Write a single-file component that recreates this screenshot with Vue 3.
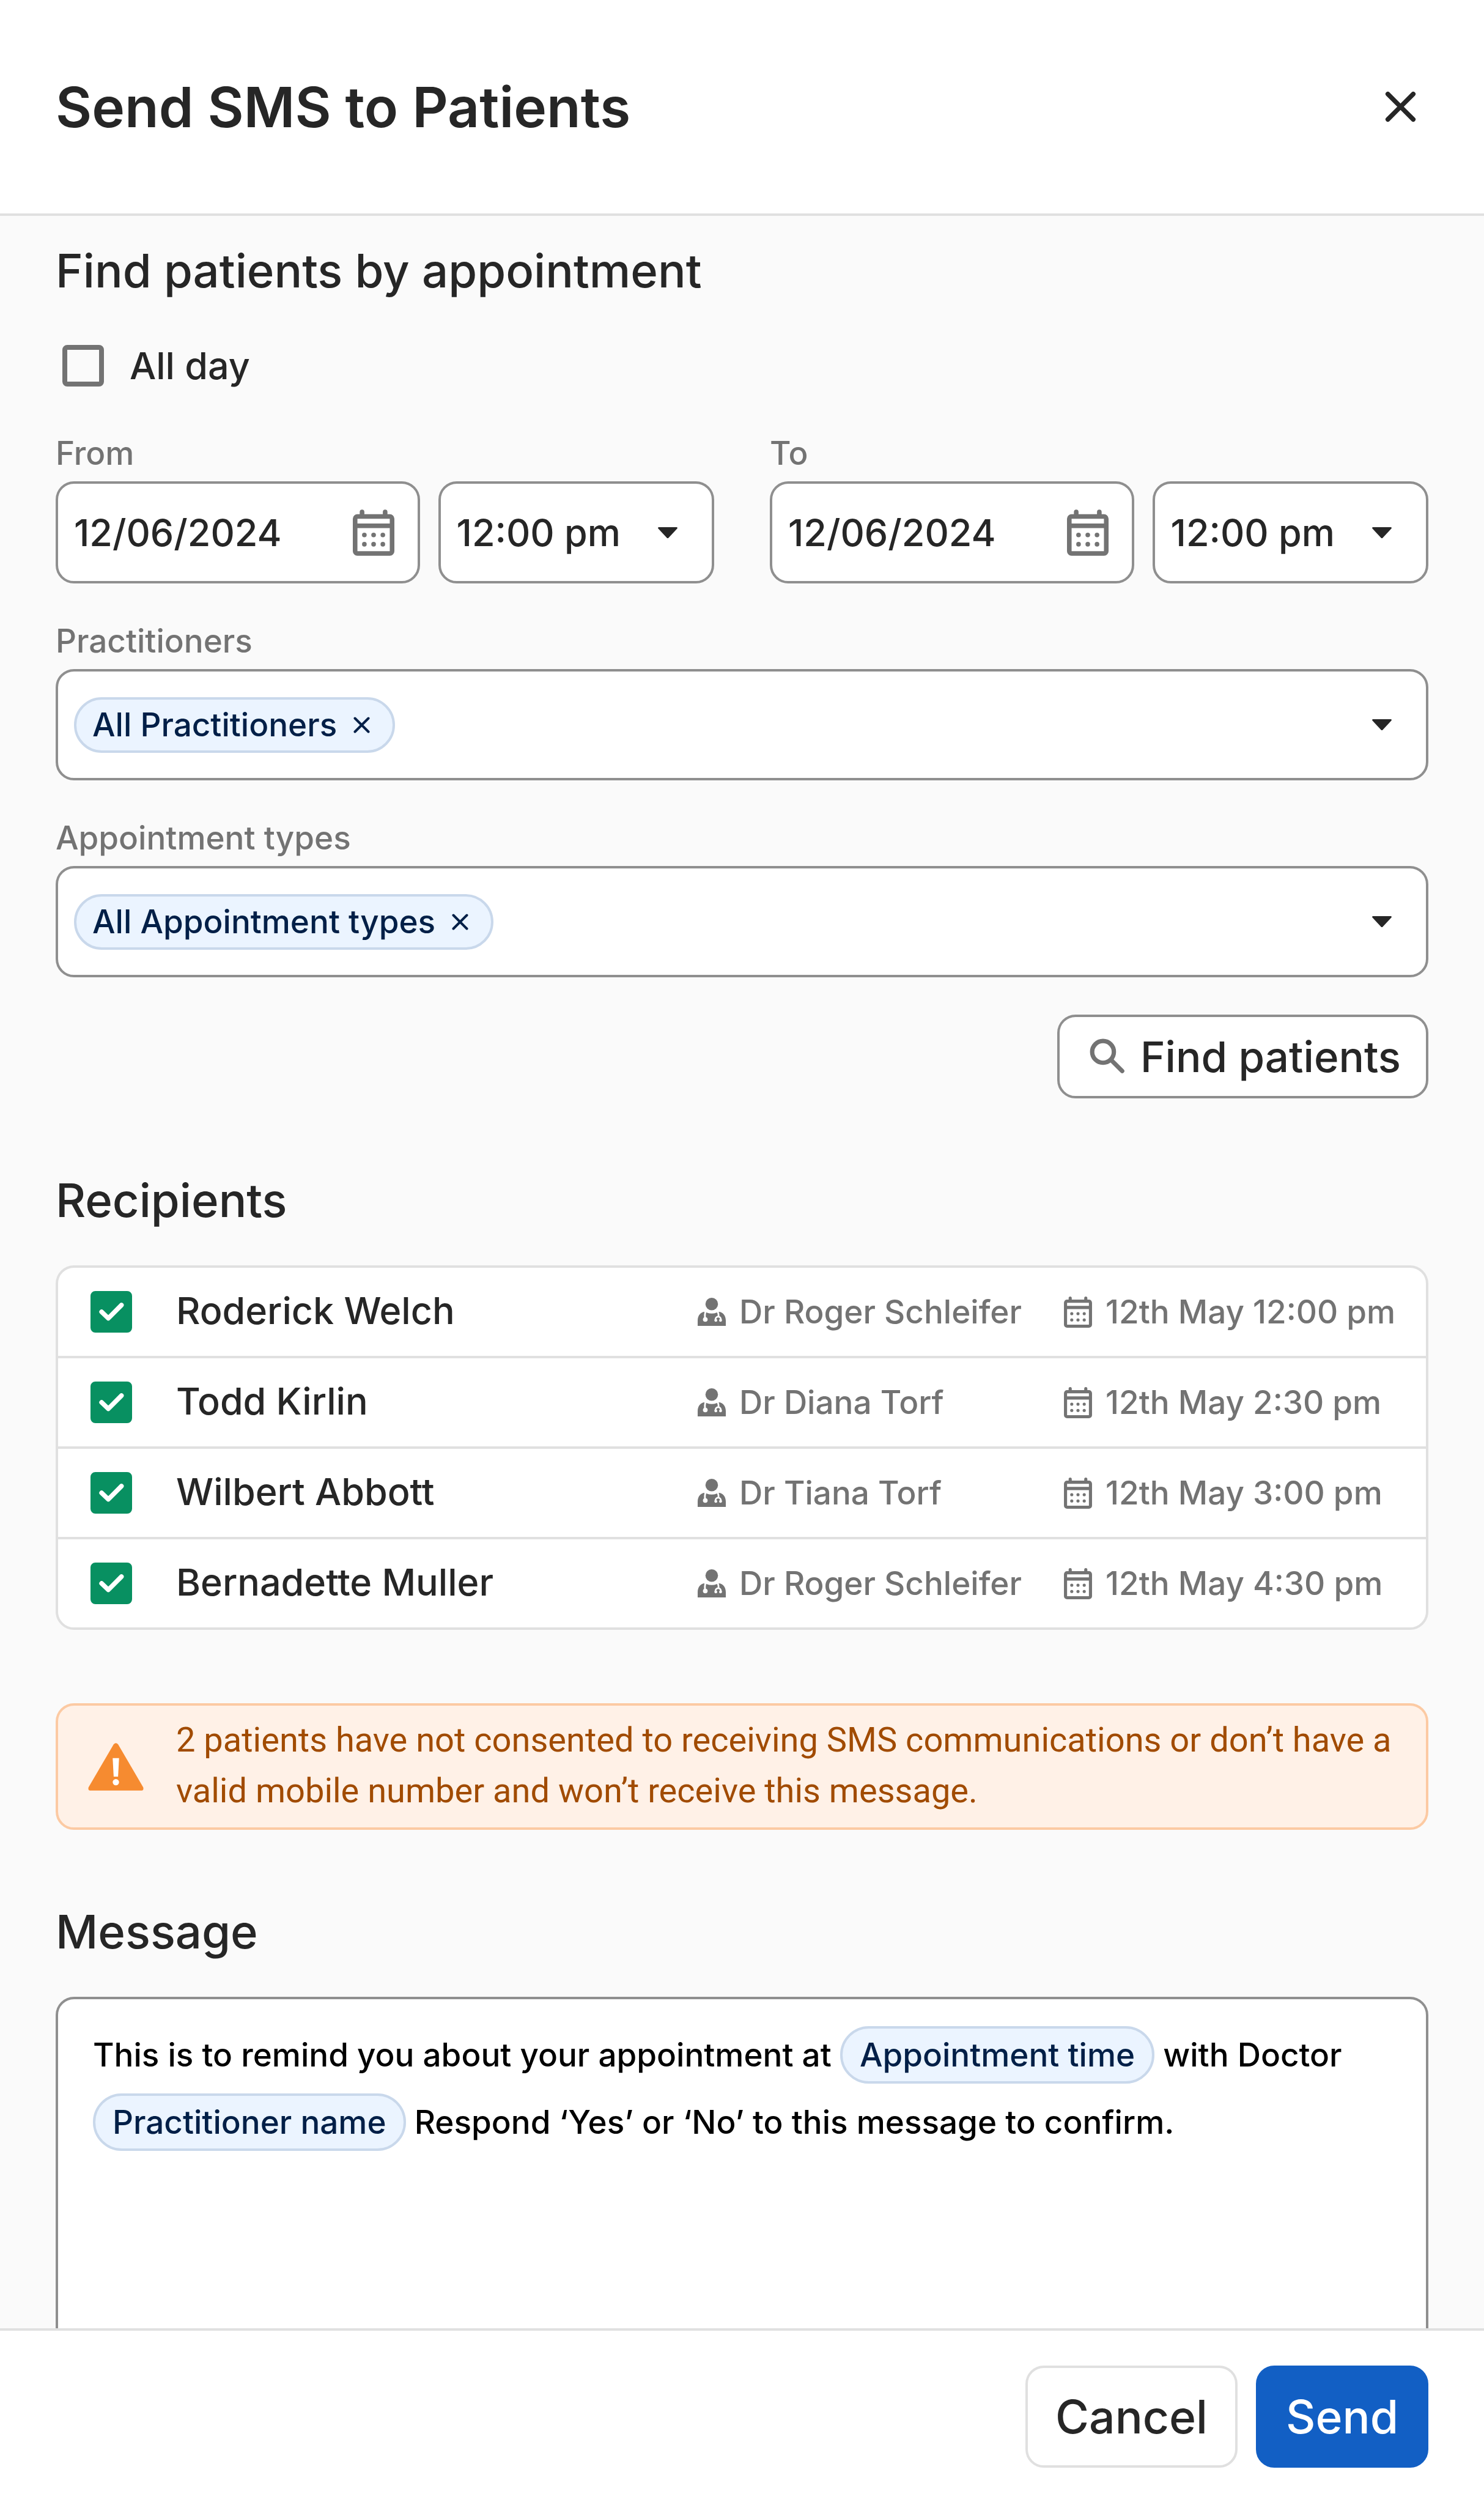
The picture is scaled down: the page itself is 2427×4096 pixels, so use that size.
<script setup>
import { reactive, ref } from 'vue'

const allDay = ref(false)

const ranges = reactive([
  { id: 'from', label: 'From', date: '12/06/2024', time: '12:00 pm' },
  { id: 'to', label: 'To', date: '12/06/2024', time: '12:00 pm' },
])

const filters = [
  { id: 'practitioners', label: 'Practitioners', tag: 'All Practitioners' },
  { id: 'types', label: 'Appointment types', tag: 'All Appointment types' },
]

const recipients = reactive([
  { name: 'Roderick Welch', doctor: 'Dr Roger Schleifer', time: '12th May 12:00 pm', selected: true },
  { name: 'Todd Kirlin', doctor: 'Dr Diana Torf', time: '12th May 2:30 pm', selected: true },
  { name: 'Wilbert Abbott', doctor: 'Dr Tiana Torf', time: '12th May 3:00 pm', selected: true },
  { name: 'Bernadette Muller', doctor: 'Dr Roger Schleifer', time: '12th May 4:30 pm', selected: true },
])
</script>

<template>
  <div class="dialog" role="dialog" aria-labelledby="dialog-title">
    <svg class="sprite" aria-hidden="true">
      <symbol id="icon-calendar" viewBox="0 0 18 20">
        <path
          fill-rule="evenodd"
          d="M3 2V1a1 1 0 0 1 2 0v1h8V1a1 1 0 0 1 2 0v1h1a2 2 0 0 1 2 2v14a2 2 0 0 1-2 2H2a2 2 0 0 1-2-2V4a2 2 0 0 1 2-2ZM2 4v2h14V4ZM2 8v10h14V8Z"
        />
        <g>
          <circle cx="5" cy="11" r="1" /><circle cx="9" cy="11" r="1" /><circle cx="13" cy="11" r="1" />
          <circle cx="5" cy="15" r="1" /><circle cx="9" cy="15" r="1" /><circle cx="13" cy="15" r="1" />
        </g>
      </symbol>
      <symbol id="icon-caret" viewBox="0 0 34 19">
        <path d="M1.5 0h31a1.3 1.3 0 0 1 1 2.200L18.400 18.400a2 2 0 0 1-2.800 0L.5 2.200A1.300 1.300 0 0 1 1.500 0Z" />
      </symbol>
      <symbol id="icon-doctor" viewBox="0 0 48 48">
        <circle cx="24" cy="10.700" r="10.700" />
        <path d="M0 48V39C0 30.500 5 24.300 12 24L15.500 25.200Q24 28.500 32.500 25.200L36 24C43 24.300 48 30.500 48 39V48Z" />
        <g fill="none" stroke="#fff" stroke-width="3">
          <path d="M13.300 23C12.400 27 12 30 12.500 34" />
          <path d="M34 23C35.500 26 36 29 35.700 33" />
          <path d="M30.300 39V37.500C30.300 30.500 39.700 30.500 39.700 37.500V39" />
        </g>
        <g fill="#fff">
          <circle cx="13" cy="37" r="4" />
          <circle cx="31" cy="38.600" r="2.400" /><circle cx="39" cy="38.600" r="2.400" />
        </g>
      </symbol>
      <symbol id="icon-close" viewBox="0 0 54 54">
        <path d="M5 5 49 49M49 5 5 49" fill="none" stroke="currentColor" stroke-width="8" stroke-linecap="round" />
      </symbol>
    </svg>

    <header class="header">
      <h1 id="dialog-title">Send SMS to Patients</h1>
      <button class="close" type="button" aria-label="Close">
        <svg><use href="#icon-close" /></svg>
      </button>
    </header>

    <main class="content">
      <form class="section" @submit.prevent>
        <h2>Find patients by appointment</h2>

        <label class="all-day">
          <input v-model="allDay" class="check" type="checkbox" />
          All day
        </label>

        <div class="ranges">
          <div v-for="range in ranges" :key="range.id" class="field">
            <label :for="range.id + '-date'">{{ range.label }}</label>
            <div class="range">
              <div class="box">
                <input :id="range.id + '-date'" v-model="range.date" type="text" />
                <svg class="calendar"><use href="#icon-calendar" /></svg>
              </div>
              <div class="box">
                <select v-model="range.time" :aria-label="range.label + ' time'">
                  <option>12:00 pm</option>
                  <option>1:00 pm</option>
                </select>
                <svg class="caret"><use href="#icon-caret" /></svg>
              </div>
            </div>
          </div>
        </div>

        <div v-for="filter in filters" :key="filter.id" class="field filter">
          <label :for="filter.id">{{ filter.label }}</label>
          <div class="box tall">
            <span class="tag">
              {{ filter.tag }}
              <button type="button" :aria-label="'Remove ' + filter.tag">
                <svg><use href="#icon-close" /></svg>
              </button>
            </span>
            <input :id="filter.id" type="text" />
            <svg class="caret"><use href="#icon-caret" /></svg>
          </div>
        </div>

        <button class="find" type="submit">
          <svg viewBox="0 0 80 80">
            <g fill="none" stroke="currentColor" stroke-width="7.500" stroke-linecap="round">
              <circle cx="31.500" cy="31.500" r="18.700" />
              <path d="M45.500 45.500 64.500 64.500" />
            </g>
          </svg>
          Find patients
        </button>
      </form>

      <section class="section">
        <h2>Recipients</h2>
        <div class="list">
          <table>
            <colgroup>
              <col class="col-check" />
              <col />
              <col class="col-doctor" />
              <col class="col-time" />
            </colgroup>
            <tbody>
              <tr v-for="(person, i) in recipients" :key="person.name">
                <td>
                  <span class="tick">
                    <input :id="'recipient-' + i" v-model="person.selected" class="check" type="checkbox" />
                    <svg viewBox="0 0 18 18">
                      <path d="M4.800 9 7.700 11.800 13.400 6.100" fill="none" stroke="#fff" stroke-width="2" stroke-linecap="round" stroke-linejoin="round" />
                    </svg>
                  </span>
                </td>
                <td><label :for="'recipient-' + i">{{ person.name }}</label></td>
                <td>
                  <span class="meta"><svg class="doctor"><use href="#icon-doctor" /></svg>{{ person.doctor }}</span>
                </td>
                <td>
                  <span class="meta"><svg class="date"><use href="#icon-calendar" /></svg>{{ person.time }}</span>
                </td>
              </tr>
            </tbody>
          </table>
        </div>
      </section>

      <div class="warning" role="alert">
        <svg viewBox="0 0 96 82">
          <path d="M44 2.500Q48-2 52 2.500L95 76Q97 82 91 82H5Q-1 82 1 76Z" fill="#f68b30" />
          <path d="M42.500 26h11l-1.700 32h-7.600Z" fill="#fff" />
          <circle cx="48" cy="67.500" r="5.500" fill="#fff" />
        </svg>
        <p>2 patients have not consented to receiving SMS communications or don’t have a valid mobile number and won’t receive this message.</p>
      </div>

      <section class="section">
        <h2 id="message-title">Message</h2>
        <div class="message" role="textbox" aria-multiline="true" aria-labelledby="message-title" contenteditable="true" spellcheck="false">This is to remind you about your appointment at <span class="token" contenteditable="false">Appointment time</span> with Doctor <span class="token" contenteditable="false">Practitioner name</span> Respond ‘Yes’ or ‘No’ to this message to confirm.</div>
      </section>
    </main>

    <footer class="footer">
      <button class="action" type="button">Cancel</button>
      <button class="action primary" type="button">Send</button>
    </footer>
  </div>
</template>

<style>
body {
  margin: 0;
}
</style>

<style scoped>
* {
  box-sizing: border-box;
}

.dialog {
  display: flex;
  flex-direction: column;
  height: 100vh;
  background: #fff;
  color: #262626;
  font-family: Inter, "Liberation Sans", sans-serif;
  font-weight: 500;
  font-size: 53px;
}

.sprite {
  position: absolute;
  width: 0;
  height: 0;
}

svg {
  display: block;
  flex: none;
  fill: currentColor;
}

button,
input,
select {
  margin: 0;
  padding: 0;
  border: 0;
  background: none;
  color: inherit;
  font: inherit;
}

h1,
h2,
p {
  margin: 0;
}

.header {
  display: flex;
  flex: none;
  align-items: center;
  justify-content: space-between;
  height: 353px;
  padding: 0 91px;
  border-bottom: 4px solid #e0e0e0;
}

h1 {
  font-size: 91px;
  font-weight: 600;
  line-height: 120px;
}

.close {
  padding: 20px;
}

.close svg {
  width: 51px;
  height: 51px;
}

.content {
  display: flex;
  flex: 1;
  flex-direction: column;
  gap: 120px;
  min-height: 0;
  padding: 43px 91px 0;
  overflow-y: auto;
  scrollbar-width: none;
  background: #fafafa;
}

.section {
  display: flex;
  flex: none;
  flex-direction: column;
}

h2 {
  margin-bottom: 61px;
  font-size: 76px;
  font-weight: 500;
  line-height: 92px;
}

.check {
  width: 68px;
  height: 68px;
  border: 8px solid #737373;
  border-radius: 8px;
  appearance: none;
}

.check:checked {
  border-color: #089061;
  background: #089061;
}

.all-day {
  display: flex;
  align-items: center;
  gap: 42px;
  margin: 15px 0 71px;
  padding-left: 11px;
  font-size: 61px;
  line-height: 68px;
}

.ranges {
  display: grid;
  grid-template-columns: repeat(2, minmax(0, 1fr));
  gap: 91px;
}

.range {
  display: grid;
  grid-template-columns: minmax(0, 157fr) minmax(0, 119fr);
  gap: 30px;
  font-size: 61px;
}

.field > label {
  display: block;
  margin-bottom: 8px;
  color: #737373;
  line-height: 76px;
}

.filter {
  margin-top: 56px;
}

.box {
  display: flex;
  align-items: center;
  height: 167px;
  border: 4px solid #8f8f8f;
  border-radius: 30px;
  background: #fff;
}

.tall {
  height: 182px;
  padding-left: 26px;
}

.box > input,
.box > select {
  flex: 1;
  align-self: stretch;
  min-width: 0;
  outline: 0;
  appearance: none;
}

.range input,
.range select {
  padding-left: 26px;
}

.calendar {
  width: 68px;
  height: 76px;
  margin-right: 38px;
  color: #737373;
}

.caret {
  width: 32px;
  height: 18px;
  margin-right: 56px;
}

.tag,
.token {
  border: 4px solid #c9d8eb;
  border-radius: 48px;
  background: #ebf4ff;
  color: #001f47;
}

.tag {
  display: flex;
  align-items: center;
  gap: 18px;
  height: 91px;
  padding: 0 28px 0 26px;
}

.tag button {
  padding: 9px;
}

.tag svg {
  width: 27px;
  height: 27px;
}

.find {
  display: flex;
  align-items: center;
  align-self: flex-end;
  gap: 15px;
  height: 137px;
  margin-top: 61px;
  padding: 0 41px;
  border: 4px solid #8f8f8f;
  border-radius: 30px;
  background: #fff;
  font-size: 69px;
}

.find svg {
  width: 76px;
  height: 76px;
  color: #737373;
}

.list {
  overflow: hidden;
  border: 4px solid #e0e0e0;
  border-radius: 30px;
  background: #fff;
}

table {
  width: 100%;
  border-spacing: 0;
  table-layout: fixed;
}

.col-check {
  width: 193px;
}

.col-doctor {
  width: 599px;
}

.col-time {
  width: 592px;
}

td {
  height: 148px;
  padding: 0;
  border-bottom: 4px solid #e0e0e0;
  white-space: nowrap;
}

tr:last-child td {
  height: 144px;
  border-bottom: 0;
}

td label {
  display: block;
  padding-bottom: 4px;
  font-size: 61px;
}

.tick {
  display: grid;
  width: 68px;
  margin-left: 53px;
}

.tick > * {
  grid-area: 1 / 1;
  width: 68px;
  height: 68px;
}

.tick svg {
  pointer-events: none;
}

.meta {
  display: flex;
  align-items: center;
  gap: 22px;
  color: #737373;
}

.doctor {
  width: 46px;
  height: 46px;
}

.date {
  width: 46px;
  height: 51px;
}

.warning {
  display: flex;
  flex: none;
  align-items: center;
  gap: 53px;
  min-height: 207px;
  padding: 0 30px 0 49px;
  border: 4px solid #fccaa3;
  border-radius: 30px;
  background: #fff1e7;
  color: #a14b00;
  font-family: Roboto, "Liberation Sans", sans-serif;
  font-size: 56px;
  font-weight: 400;
  line-height: 83px;
}

.warning p {
  padding-bottom: 4px;
}

.warning svg {
  width: 91px;
  height: 78px;
}

.message {
  height: 760px;
  padding: 36px 57px;
  border: 4px solid #8f8f8f;
  border-radius: 30px;
  background: #fff;
  color: #000;
  line-height: 110px;
}

.token {
  padding: 11px 28px;
}

.footer {
  display: flex;
  flex: none;
  justify-content: flex-end;
  gap: 30px;
  padding: 57px 91px 61px;
  border-top: 4px solid #e0e0e0;
}

.action {
  height: 167px;
  padding: 0 45px;
  border: 4px solid #e0e0e0;
  border-radius: 30px;
  font-size: 75px;
}

.primary {
  border-color: #125fc4;
  background: #125fc4;
  color: #fff;
}
</style>
